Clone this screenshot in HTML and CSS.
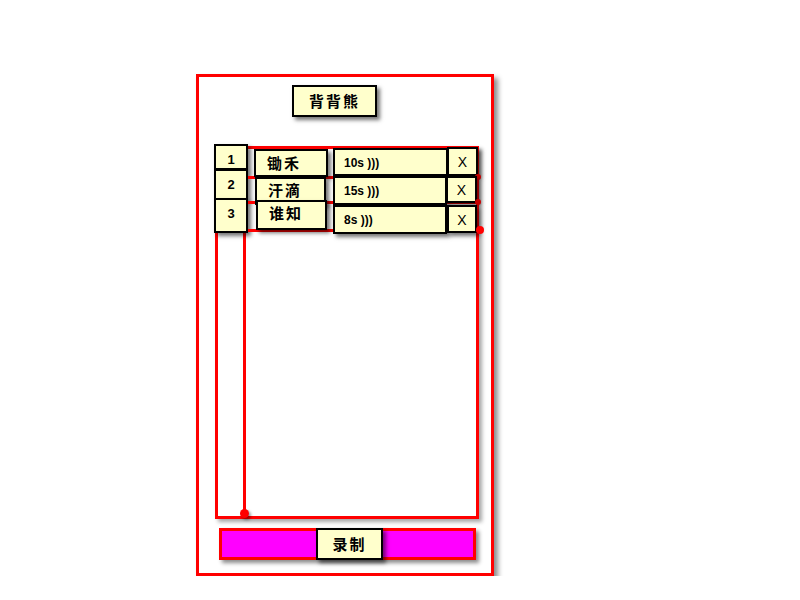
FILE: index.html
```html
<!DOCTYPE html>
<html lang="zh">
<head>
    <meta charset="UTF-8">
    <title>背背熊</title>
    <link rel="stylesheet" href="styles.css">
</head>
<body>
    <div class="frame">
        <div class="title">背背熊</div>

        <div class="list">
            <div class="nums">
                <div class="num num-1">1</div>
                <div class="num num-2">2</div>
                <div class="num num-3">3</div>
                <div class="stem"></div>
                <div class="stem-dot"></div>
            </div>

            <div class="rows">
                <div class="row row-1">
                    <div class="cell name">锄禾</div>
                    <div class="cell dur">10s )))</div>
                    <div class="cell del">X</div>
                </div>
                <div class="row row-2">
                    <div class="cell name">汗滴</div>
                    <div class="cell dur">15s )))</div>
                    <div class="cell del">X</div>
                </div>
                <div class="row row-3">
                    <div class="cell name">谁知</div>
                    <div class="cell dur">8s )))</div>
                    <div class="cell del">X</div>
                </div>
            </div>
        </div>

        <div class="bar">
            <div class="record">录制</div>
        </div>
    </div>
</body>
</html>
```

FILE: styles.css
```css
body {
    margin: 0;
    background: #ffffff;
    font-family: "Liberation Sans", Arial, "Noto Sans CJK SC", sans-serif;
    color: #000000;
}

.frame {
    box-sizing: border-box;
    width: 298px;
    height: 502px;
    margin: 74px 0 0 196px;
    border: 3px solid #ff0000;
    box-shadow: 4px 4px 5px rgba(0,0,0,0.45);
}

/* yellow boxes with a black edge */
.title, .num, .cell, .record {
    box-sizing: border-box;
    background: #ffffcc;
    border: 2px solid #000000;
    box-shadow: 3px 3px 4px rgba(0,0,0,0.55);
}

.title {
    width: 85px;
    height: 32px;
    margin: 8px 0 0 93px;
    font-family: "Noto Sans CJK SC", sans-serif;
    font-weight: bold;
    font-size: 15px;
    letter-spacing: 2px;
    line-height: 28px;
    text-align: center;
}

.list {
    box-sizing: border-box;
    display: flex;
    width: 264px;
    height: 373px;
    margin: 29px 0 0 16px;
    border: 3px solid #ff0000;
    box-shadow: 3px 3px 4px rgba(0,0,0,0.35);
}

.nums {
    display: flex;
    flex-direction: column;
    width: 34px;
    margin: -5px 0 -2px -4px;
}
.num {
    width: 34px;
    font-weight: bold;
    font-size: 13px;
    text-align: center;
    position: relative;
}
.num-1 {
    height: 26px;
    line-height: 27px;
}
.num-2 {
    height: 31px;
    margin-top: -1px;
    line-height: 27px;
}
.num-3 {
    height: 35px;
    margin-top: -2px;
    line-height: 27px;
}
.stem {
    flex: 1;
    width: 3px;
    margin: 0 0 -4px 29px;
    background: #ff0000;
}
.stem-dot {
    width: 9px;
    height: 9px;
    margin-left: 26px;
    border-radius: 50%;
    background: #ff0000;
    box-shadow: 2px 2px 3px rgba(0,0,0,0.4);
}

.rows {
    flex: 1;
    margin: -2px -3px 0 0;
}
.row {
    box-sizing: border-box;
    display: flex;
    align-items: flex-start;
    border-bottom: 3px solid #ff0000;
    position: relative;
}
.row::after {
    content: "";
    position: absolute;
    right: -2px;
    bottom: -4px;
    width: 6px;
    height: 6px;
    border-radius: 50%;
    background: #c80000;
}

.name {
    padding-left: 11px;
    font-family: "Noto Sans CJK SC", sans-serif;
    font-weight: bold;
    font-size: 15px;
    letter-spacing: 2px;
}
.dur {
    padding-left: 9px;
    font-weight: bold;
    font-size: 12px;
}
.del {
    font-size: 14px;
    text-align: center;
}

.row-1 {
    height: 32px;
}
.row-1 .name {
    width: 74px;
    height: 28px;
    margin: 2px 0 0 6px;
    line-height: 24px;
}
.row-1 .dur {
    width: 115px;
    height: 28px;
    margin: 1px 0 0 5px;
    line-height: 26px;
}
.row-1 .del {
    width: 31px;
    height: 29px;
    margin-left: -1px;
    line-height: 26px;
}

.row-2 {
    height: 28px;
    margin-top: -3px;
}
.row-2 .name {
    width: 71px;
    height: 28px;
    margin: 1px 0 0 7px;
    line-height: 22px;
}
.row-2 .dur {
    width: 114px;
    height: 29px;
    margin-left: 7px;
    line-height: 26px;
}
.row-2 .del {
    width: 31px;
    height: 27px;
    margin-left: -1px;
    line-height: 24px;
}

.row-3 {
    height: 31px;
    margin-top: -3px;
}
.row-3::after {
    width: 8px;
    height: 8px;
    right: -5px;
    bottom: -5px;
    background: #ff0000;
}
.row-3 .name {
    width: 71px;
    height: 30px;
    margin: -1px 0 0 8px;
    line-height: 22px;
}
.row-3 .dur {
    width: 114px;
    height: 29px;
    margin: 4px 0 0 6px;
    line-height: 27px;
}
.row-3 .del {
    width: 30px;
    height: 28px;
    margin-top: 4px;
    line-height: 26px;
}

.bar {
    box-sizing: border-box;
    display: flex;
    width: 257px;
    height: 32px;
    margin: 9px 0 0 20px;
    background: #ff00ff;
    border: 3px solid #ff0000;
    box-shadow: 3px 3px 4px rgba(0,0,0,0.45);
}
.record {
    flex: none;
    width: 67px;
    height: 32px;
    margin: -3px 0 0 94px;
    font-family: "Noto Sans CJK SC", sans-serif;
    font-weight: bold;
    font-size: 15px;
    letter-spacing: 2px;
    line-height: 28px;
    text-align: center;
}
```
